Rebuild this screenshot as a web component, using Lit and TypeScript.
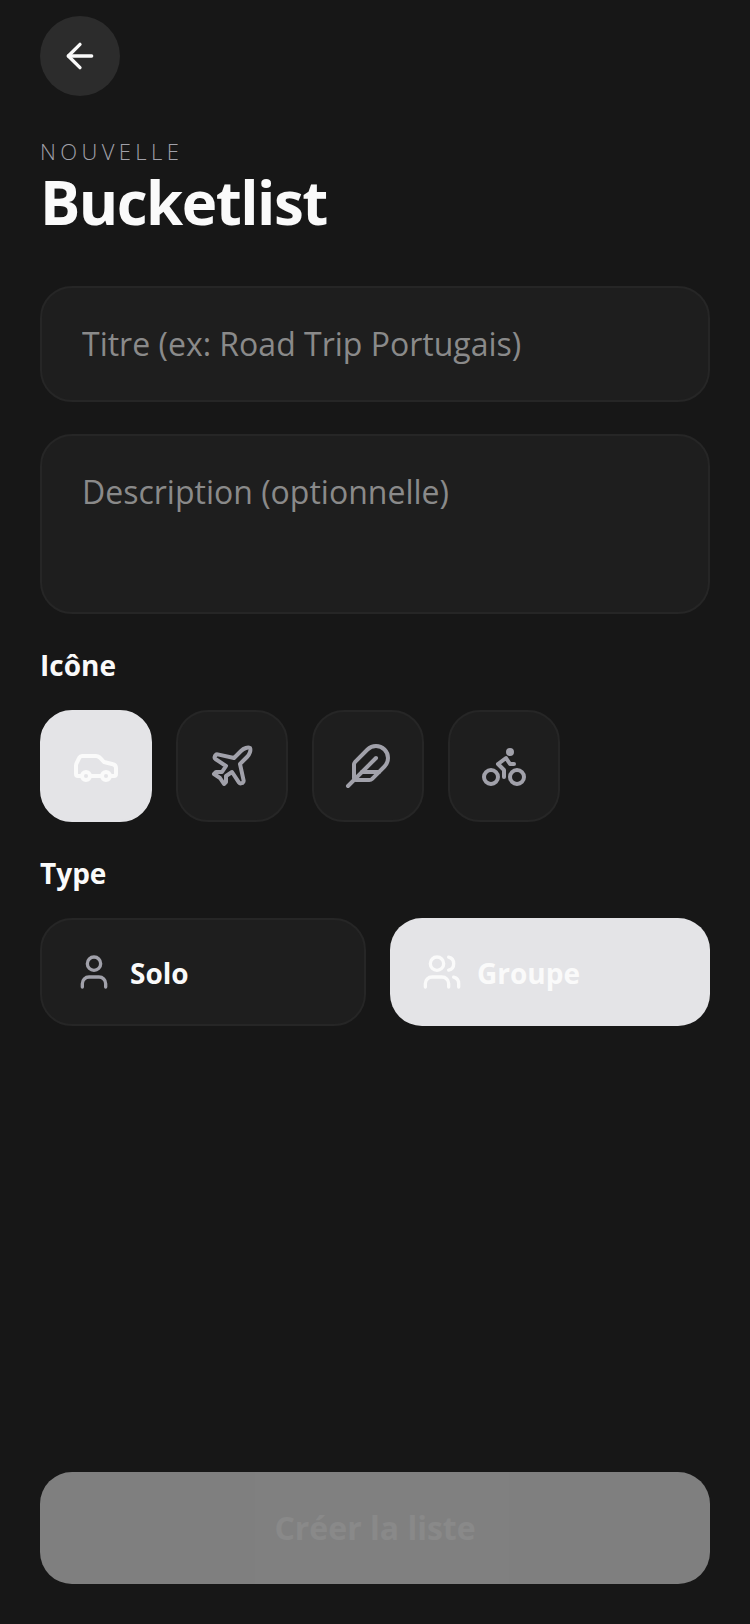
import { LitElement, html, css, svg } from 'lit';
import { customElement, state } from 'lit/decorators.js';

const ICONS = {
  car: svg`<path d="M19 17h2c.6 0 1-.4 1-1v-3c0-.9-.7-1.7-1.5-1.9C18.7 10.6 16 10 16 10s-1.3-1.4-2.2-2.3c-.5-.4-1.1-.7-1.8-.7H5c-.6 0-1.1.4-1.4.9l-1.4 2.9A3.7 3.7 0 0 0 2 12v4c0 .6.4 1 1 1h2"/><circle cx="7" cy="17" r="2"/><path d="M9 17h6"/><circle cx="17" cy="17" r="2"/>`,
  plane: svg`<path d="M17.8 19.2 16 11l3.5-3.5C21 6 21.5 4 21 3c-1-.5-3 0-4.5 1.5L13 8 4.8 6.2c-.5-.1-.9.1-1.1.5l-.3.5c-.2.5-.1 1 .3 1.3L9 12l-2 3H4l-1 1 3 2 2 3 1-1v-3l3-2 3.5 5.3c.3.4.8.5 1.3.3l.5-.2c.4-.3.6-.7.5-1.2z"/>`,
  feather: svg`<path d="M12.67 19a2 2 0 0 0 1.416-.588l6.154-6.172a6 6 0 0 0-8.49-8.49L5.586 9.914A2 2 0 0 0 5 11.328V18a1 1 0 0 0 1 1z"/><path d="M16 8 2 22"/><path d="M17.5 15H9"/>`,
  bike: svg`<circle cx="18.5" cy="17.5" r="3.5"/><circle cx="5.5" cy="17.5" r="3.5"/><circle cx="15" cy="5" r="1"/><path d="M12 17.5V14l-3-3 4-3 2 3h2"/>`,
  user: svg`<path d="M19 21v-2a4 4 0 0 0-4-4H9a4 4 0 0 0-4 4v2"/><circle cx="12" cy="7" r="4"/>`,
  users: svg`<path d="M16 21v-2a4 4 0 0 0-4-4H6a4 4 0 0 0-4 4v2"/><circle cx="9" cy="7" r="4"/><path d="M22 21v-2a4 4 0 0 0-3-3.87"/><path d="M16 3.13a4 4 0 0 1 0 7.75"/>`,
  back: svg`<path d="m12 19-7-7 7-7"/><path d="M19 12H5"/>`,
};

type IconName = keyof typeof ICONS;

const icon = (name: IconName) => html`
  <svg viewBox="0 0 24 24" fill="none" stroke="currentColor" stroke-linecap="round" stroke-linejoin="round">
    ${ICONS[name]}
  </svg>
`;

@customElement('app-root')
export class AppRoot extends LitElement {
  @state() selectedIcon: IconName = 'car';
  @state() listType = 'groupe';

  static styles = css`
    :host {
      display: block;
    }

    * {
      box-sizing: border-box;
    }

    .page {
      height: 1624px;
      background: #171717;
      padding: 16px 40px 40px;
      display: flex;
      flex-direction: column;
      font-family: 'Open Sans', sans-serif;
      color: #fafafa;
    }

    .back {
      width: 80px;
      height: 80px;
      padding: 0;
      border: none;
      border-radius: 50%;
      background: #2c2c2c;
      color: #fafafa;
      display: flex;
      align-items: center;
      justify-content: center;
    }

    .back svg {
      width: 40px;
      height: 40px;
      stroke-width: 2;
    }

    .eyebrow {
      margin-top: 43px;
      font-size: 22px;
      font-weight: 300;
      line-height: 24px;
      letter-spacing: 4.4px;
      color: #a1a1aa;
    }

    h1 {
      margin: 3px 0 48px;
      font-size: 60px;
      line-height: 72px;
      letter-spacing: -1.5px;
      font-weight: 700;
    }

    .field {
      display: block;
      width: 100%;
      background: #1e1e1e;
      border: 2px solid #262626;
      border-radius: 32px;
      padding: 0 40px;
      color: #fafafa;
      font: 400 32px/44px 'Open Sans', sans-serif;
      outline: none;
      resize: none;
    }

    .field::placeholder {
      color: #8a8a8a;
      opacity: 1;
    }

    input.field {
      height: 116px;
      padding-bottom: 2px;
    }

    textarea.field {
      height: 180px;
      margin-top: 32px;
      padding-top: 34px;
    }

    .label {
      font-size: 28px;
      line-height: 40px;
      font-weight: 700;
      margin: 31px 0 25px;
    }

    .icon-row {
      display: flex;
      gap: 24px;
    }

    .icon-btn {
      width: 112px;
      height: 112px;
      padding: 0;
      border-radius: 32px;
      border: 2px solid #262626;
      background: #1e1e1e;
      color: #a1a1aa;
      display: flex;
      align-items: center;
      justify-content: center;
    }

    .icon-btn svg {
      width: 48px;
      height: 48px;
      stroke-width: 2;
    }

    .icon-btn.on {
      background: #e4e4e7;
      border-color: #e4e4e7;
      color: #fafafa;
    }

    .type-row {
      display: grid;
      grid-template-columns: 326px 320px;
      gap: 24px;
    }

    .type-btn {
      height: 108px;
      padding: 0 32px;
      border-radius: 32px;
      border: 2px solid #262626;
      background: #1e1e1e;
      color: #fafafa;
      display: flex;
      align-items: center;
      gap: 16px;
      font: 700 28px/40px 'Open Sans', sans-serif;
    }

    .type-btn span {
      margin-top: 2px;
    }

    .type-btn svg {
      width: 40px;
      height: 40px;
      stroke-width: 2;
      color: #a1a1aa;
    }

    .type-btn.on {
      background: #e4e4e7;
      border: none;
      gap: 15px;
    }

    .type-btn.on svg {
      color: #fafafa;
    }

    .submit {
      margin-top: auto;
      height: 112px;
      border: none;
      border-radius: 32px;
      background: #e8e8e8;
      color: #fafafa;
      opacity: 0.5;
      font: 700 32px/44px 'Open Sans', sans-serif;
    }
  `;

  render() {
    const iconNames: IconName[] = ['car', 'plane', 'feather', 'bike'];
    return html`
      <div class="page">
        <button class="back">${icon('back')}</button>
        <div class="eyebrow">NOUVELLE</div>
        <h1>Bucketlist</h1>
        <input class="field" placeholder="Titre (ex: Road Trip Portugais)" />
        <textarea class="field" placeholder="Description (optionnelle)"></textarea>
        <div class="label">Icône</div>
        <div class="icon-row">
          ${iconNames.map(
            (name) => html`
              <button
                class="icon-btn ${this.selectedIcon === name ? 'on' : ''}"
                @click=${() => (this.selectedIcon = name)}
              >
                ${icon(name)}
              </button>
            `
          )}
        </div>
        <div class="label">Type</div>
        <div class="type-row">
          <button class="type-btn ${this.listType === 'solo' ? 'on' : ''}" @click=${() => (this.listType = 'solo')}>
            ${icon('user')}<span>Solo</span>
          </button>
          <button class="type-btn ${this.listType === 'groupe' ? 'on' : ''}" @click=${() => (this.listType = 'groupe')}>
            ${icon('users')}<span>Groupe</span>
          </button>
        </div>
        <button class="submit" disabled>Créer la liste</button>
      </div>
    `;
  }
}
